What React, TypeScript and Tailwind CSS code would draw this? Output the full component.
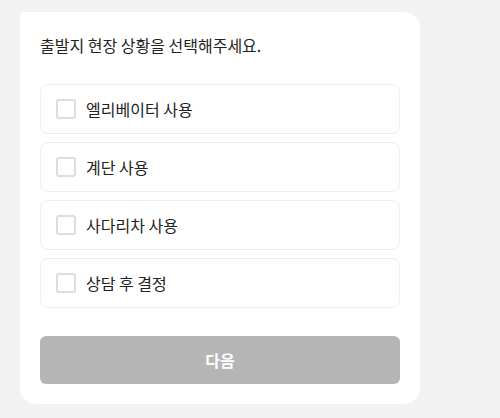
const OPTIONS = ['엘리베이터 사용', '계단 사용', '사다리차 사용', '상담 후 결정']

export default function App() {
  return (
    <div
      className="min-h-[418px] w-full bg-[#f2f2f2] pt-[12px] pl-[20px]"
      style={{ fontFamily: '"Noto Sans CJK KR", "Noto Sans", sans-serif' }}
    >
      <div className="w-[400px] bg-white rounded-2xl rounded-tl-[4px] px-[20px] pt-[20px] pb-[20px]">
        <p className="text-[16px] leading-[26px] text-[#222]">출발지 현장 상황을 선택해주세요.</p>

        <div className="mt-[26px] flex flex-col gap-[8px]">
          {OPTIONS.map((label) => (
            <label
              key={label}
              className="h-[50px] flex items-center gap-[10px] px-[15px] border border-[#eeeeee] rounded-[8px] cursor-pointer"
            >
              <span className="w-[20px] h-[20px] border-2 border-[#dddddd] rounded-[3px] bg-white" />
              <span className="text-[16px] text-[#222]">{label}</span>
            </label>
          ))}
        </div>

        <button className="mt-[28px] w-full h-[48px] bg-[#b5b5b5] text-white text-[16px] font-semibold rounded-[6px]">
          다음
        </button>
      </div>
    </div>
  )
}
